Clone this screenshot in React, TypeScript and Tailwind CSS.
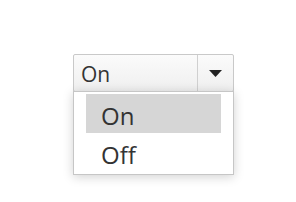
export default function App() {
  const options = ['On', 'Off'];
  const selected = 'On';

  return (
    <div className="w-[296px] h-[202px] bg-white pl-[73px] pt-[54px]" style={{ fontFamily: '"Open Sans", sans-serif' }}>
      <div className="relative w-[161px]">
        {/* Select */}
        <div className="flex h-[38px] border border-[#c9c9c9] rounded-[2px] bg-gradient-to-b from-[#fbfbfb] to-[#efefef] text-[#333]">
          <div className="flex-1 flex items-center pl-[7px] pt-[3px] text-[21px] leading-none">{selected}</div>
          <div className="w-[36px] border-l border-[#d0d0d0] flex items-center justify-center pt-[1px]">
            <svg width="13" height="7" viewBox="0 0 13 7">
              <path d="M0 0 H13 L6.5 7 Z" fill="#222" />
            </svg>
          </div>
        </div>

        {/* Menu */}
        <div className="absolute left-0 top-[37px] w-[161px] bg-white border border-[#c6c6c6] shadow-[0_2px_10px_rgba(0,0,0,0.18)] px-[12px] pt-[2px] pb-[2px]">
          {options.map((opt) => (
            <div
              key={opt}
              className={`h-[39px] flex items-center pl-[15px] pt-[4px] text-[24px] leading-none text-[#333] ${opt === selected ? 'bg-[#d6d6d6]' : ''}`}
            >
              {opt}
            </div>
          ))}
        </div>
      </div>
    </div>
  );
}
